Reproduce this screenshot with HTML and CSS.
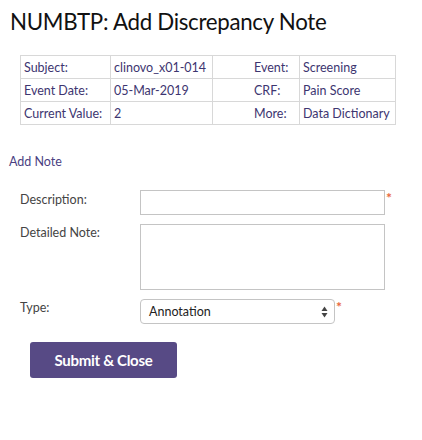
FILE: index.html
```html
<!DOCTYPE html>
<html>
<head>
<meta charset="utf-8">
<link rel="stylesheet" href="styles.css">
</head>
<body>
<h1 class="title">NUMBTP: Add Discrepancy Note</h1>
<table class="info">
  <tr>
    <td class="c1">Subject:</td>
    <td class="c2">clinovo_x01-014</td>
    <td class="c3">Event:</td>
    <td class="c4">Screening</td>
  </tr>
  <tr>
    <td class="c1">Event Date:</td>
    <td class="c2">05-Mar-2019</td>
    <td class="c3">CRF:</td>
    <td class="c4">Pain Score</td>
  </tr>
  <tr>
    <td class="c1">Current Value:</td>
    <td class="c2">2</td>
    <td class="c3">More:</td>
    <td class="c4">Data Dictionary</td>
  </tr>
</table>
<div class="section">Add Note</div>
<div class="form">
  <div class="row row-desc">
    <label class="lbl">Description:</label>
    <div class="field"><input class="inp" type="text"><span class="req">*</span></div>
  </div>
  <div class="row row-note">
    <label class="lbl">Detailed Note:</label>
    <div class="field"><textarea class="ta"></textarea></div>
  </div>
  <div class="row row-type">
    <label class="lbl">Type:</label>
    <div class="field">
      <div class="sel">
        <span>Annotation</span>
        <svg class="arrows" width="7" height="12" viewBox="0 0 7 12"><path d="M3.5 0.5 L6.5 5 L0.5 5 Z" fill="#444"/><path d="M0.5 7 L6.5 7 L3.5 11.5 Z" fill="#444"/></svg>
      </div>
      <span class="req req-sel">*</span>
    </div>
  </div>
  <button class="btn">Submit &amp; Close</button>
</div>
</body>
</html>
```
FILE: styles.css
```css
body {
  margin: 0;
  font-family: Lato, "Noto Sans", sans-serif;
  background: #fff;
}
.title {
  margin: 0;
  padding: 8px 0 0 10px;
  font-size: 22.3px;
  font-weight: 400;
  color: #111;
  line-height: 28px;
  letter-spacing: -0.3px;
}
.info {
  margin: 19px 0 0 20px;
  border-collapse: collapse;
  table-layout: fixed;
  font-size: 12.5px;
  color: #3d3570;
}
.info td {
  border: 1px solid #d8d8d8;
  height: 22px;
  padding: 0 3px;
  white-space: nowrap;
  overflow: hidden;
}
.info .c1 { width: 83px; }
.info .c2 { width: 95px; }
.info .c3 { width: 42px; padding-left: 41px; }
.info .c4 { width: 89px; }
.section {
  margin: 29px 0 0 9px;
  font-size: 12.5px;
  color: #4a3f82;
}
.form {
  padding-left: 20px;
}
.row {
  display: flex;
  align-items: flex-start;
}
.lbl {
  width: 120px;
  font-size: 12.5px;
  color: #444;
}
.row-desc { margin-top: 21px; }
.row-desc .lbl { padding-top: 2px; }
.row-note { margin-top: 9px; }
.row-note .lbl { padding-top: 1px; }
.row-type { margin-top: 9px; }
.row-type .lbl { padding-top: 1px; }
.field {
  display: flex;
  align-items: flex-start;
}
.inp {
  box-sizing: border-box;
  width: 245px;
  height: 25px;
  margin: 0;
  border: 1px solid #c4c4c4;
  border-radius: 0;
  outline: none;
}
.ta {
  box-sizing: border-box;
  width: 245px;
  height: 66px;
  margin: 0;
  border: 1px solid #c4c4c4;
  resize: none;
  display: block;
}
.req {
  color: #e8663a;
  font-size: 14px;
  line-height: 14px;
  margin-left: 1px;
  margin-top: 1px;
  font-weight: 700;
}
.sel {
  box-sizing: border-box;
  width: 195px;
  height: 25px;
  border: 1px solid #c4c4c4;
  border-radius: 4px;
  display: flex;
  align-items: center;
  justify-content: space-between;
  padding: 0 6px 0 8px;
  font-size: 12.5px;
  color: #222;
}
.arrows { display: block; }
.btn {
  margin: 18px 0 0 10px;
  width: 147px;
  height: 36px;
  border: none;
  border-radius: 3px;
  background: #574a85;
  color: #fff;
  font-family: Lato, "Noto Sans", sans-serif;
  font-weight: 700;
  font-size: 15px;
  letter-spacing: -0.3px;
  padding: 0;
}
```
